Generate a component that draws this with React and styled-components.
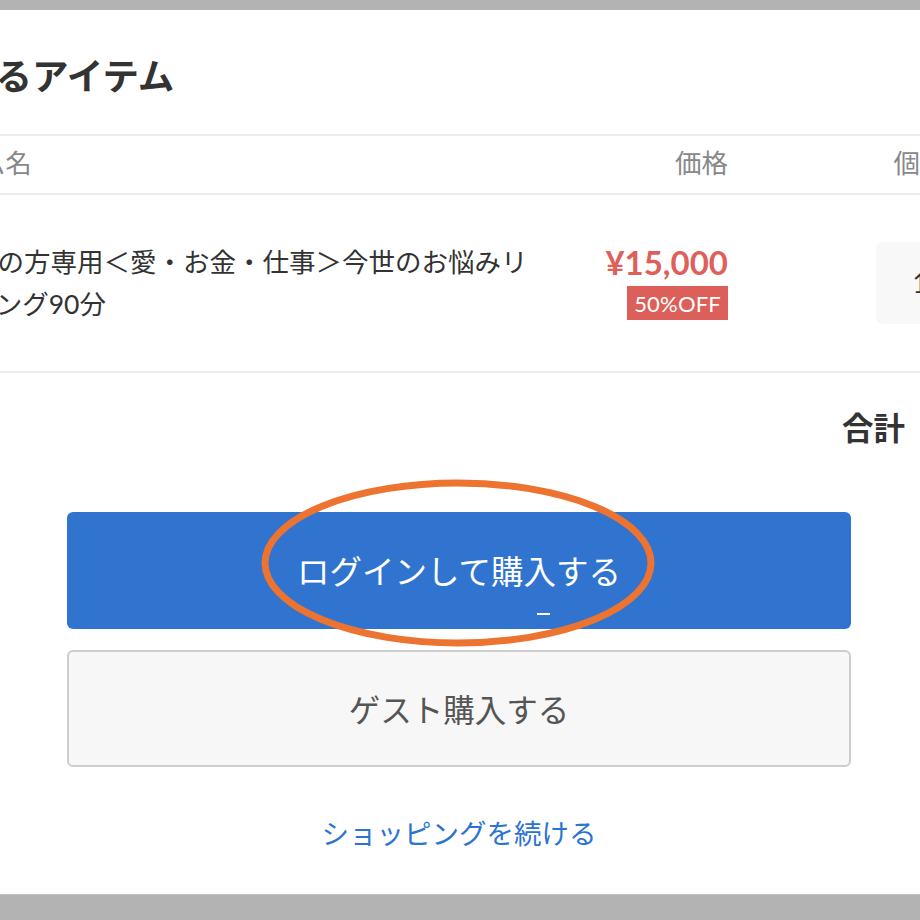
import React from "react";
import styled, { createGlobalStyle } from "styled-components";

const Global = createGlobalStyle`
  html, body { margin: 0; padding: 0; background: #b3b3b3; }
  body { font-family: "Lato", "Noto Sans CJK JP", sans-serif; }
  * { box-sizing: border-box; }
`;

const Page = styled.div`
  width: 920px;
  height: 920px;
  padding-top: 10px;
  overflow: hidden;
`;

const Panel = styled.div`
  position: relative;
  width: 920px;
  height: 885px;
  background: #fff;
  overflow: hidden;
  padding-top: 41px;
  border-bottom: 1px solid #c4c4c4;
`;

const CartSection = styled.section`
  width: 1200px;
  margin-left: -120px;
`;

const Heading = styled.h2`
  margin: 0 0 33px;
  padding-left: 6px;
  font-size: 36.5px;
  line-height: 50px;
  font-weight: 700;
  color: #333;
  white-space: nowrap;
`;

const Row = styled.div`
  display: flex;
  align-items: center;
  padding: ${(p) => p.$pad};
  padding-left: 38px;
  border-top: ${(p) => (p.$top ? "2px solid #ececec" : "none")};
  border-bottom: 2px solid #ececec;
`;

const NameCell = styled.div`
  flex: 0 0 ${(p) => (p.$head ? "636px" : "620px")};
  margin-left: ${(p) => (p.$head ? "-16px" : "0")};
  font-size: 26.5px;
  line-height: ${(p) => (p.$head ? "39px" : "42px")};
  color: ${(p) => (p.$head ? "#888" : "#333")};
`;

const PriceCell = styled.div`
  flex: 0 0 190px;
  display: flex;
  flex-direction: column;
  align-items: flex-end;
  padding-bottom: ${(p) => (p.$item ? "4px" : "0")};
  font-size: 26.5px;
  line-height: 39px;
  color: #888;
`;

const QtyCell = styled.div`
  flex: 0 0 88px;
  margin-left: 148px;
  text-align: center;
  font-size: 26.5px;
  line-height: 39px;
  color: #888;
`;

const Price = styled.div`
  font-size: 33px;
  line-height: 40px;
  font-weight: 700;
  color: #df5f5a;
`;

const Badge = styled.span`
  margin-top: 4px;
  height: 34px;
  padding: 0 7px;
  display: inline-flex;
  align-items: center;
  background: #dc5f5a;
  color: #fff;
  font-size: 22px;
  letter-spacing: 0.2px;
`;

const QtyBox = styled.div`
  width: 88px;
  height: 82px;
  border-radius: 6px;
  background: #f8f8f8;
  display: flex;
  align-items: center;
  justify-content: center;
  font-size: 26px;
  color: #333;
`;

const TotalRow = styled.div`
  display: flex;
  justify-content: flex-end;
  align-items: center;
  gap: 16px;
  padding: 34px 42px 0 0;
  font-size: 31.5px;
  line-height: 42px;
  font-weight: 700;
  color: #333;
`;

const Actions = styled.div`
  display: flex;
  flex-direction: column;
  align-items: stretch;
  width: 784px;
  margin: 63px 0 0 67px;
`;

const Button = styled.button`
  position: relative;
  height: 117px;
  border-radius: 6px;
  font-family: "Noto Sans CJK JP", sans-serif;
  font-size: ${(p) => (p.$primary ? "32.5px" : "31.5px")};
  cursor: pointer;
  background: ${(p) => (p.$primary ? "#3174cf" : "#f7f7f7")};
  color: ${(p) => (p.$primary ? "#fff" : "#555")};
  border: ${(p) => (p.$primary ? "none" : "2px solid #cdcdcd")};
  margin-top: ${(p) => (p.$primary ? "0" : "21px")};
  padding: 0 0 2px;
`;

const Dash = styled.span`
  position: absolute;
  left: 470px;
  top: 101px;
  width: 13px;
  height: 2px;
  background: #fff;
`;

const Continue = styled.a`
  margin-top: 45px;
  text-align: center;
  font-family: "Noto Sans CJK JP", sans-serif;
  font-size: 27.5px;
  line-height: 40px;
  color: #2d73d0;
  text-decoration: none;
`;

const Annotation = styled.svg`
  position: absolute;
  left: 0;
  top: 0;
  pointer-events: none;
`;

export default function App() {
  return (
    <Page>
      <Global />
      <Panel>
        <CartSection>
          <Heading>購入するアイテム</Heading>
          <Row $top $pad="8px 0 10px">
            <NameCell $head>アイテム名</NameCell>
            <PriceCell>価格</PriceCell>
            <QtyCell>個数</QtyCell>
          </Row>
          <Row $pad="46px 0">
            <NameCell>
              初めての方専用＜愛・お金・仕事＞今世のお悩みリーディング90分
            </NameCell>
            <PriceCell $item>
              <Price>¥15,000</Price>
              <Badge>50%OFF</Badge>
            </PriceCell>
            <QtyCell>
              <QtyBox>1</QtyBox>
            </QtyCell>
          </Row>
          <TotalRow>
            <span>合計</span>
            <span>¥15,000</span>
          </TotalRow>
        </CartSection>
        <Actions>
          <Button $primary>
            ログインして購入する
            <Dash />
          </Button>
          <Button>ゲスト購入する</Button>
          <Continue href="#">ショッピングを続ける</Continue>
        </Actions>
        <Annotation width="920" height="885" viewBox="0 0 920 885">
          <ellipse cx="458" cy="553" rx="193" ry="80" fill="none" stroke="#ec7330" strokeWidth="7" />
        </Annotation>
      </Panel>
    </Page>
  );
}
